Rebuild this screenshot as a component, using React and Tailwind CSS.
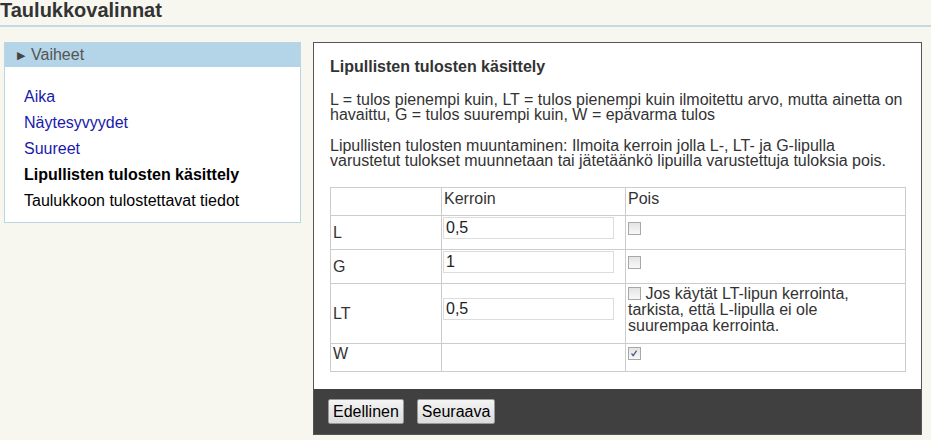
import React from "react";

function Cb({ checked, block }) {
  return (
    <span
      className={
        (block ? "block" : "inline-block align-middle -mt-[2px]") +
        " w-[13px] h-[13px] border border-[#a8a8a8] bg-gradient-to-b from-[#e4e4e4] to-[#f8f8f8] relative"
      }
    >
      {checked && (
        <svg viewBox="0 0 13 13" className="absolute left-0 top-0 w-[11px] h-[11px]">
          <path d="M3 6.5 L5 9 L9 3" stroke="#4a5a8a" strokeWidth="1.5" fill="none" />
        </svg>
      )}
    </span>
  );
}

function Field({ value }) {
  return (
    <div className="w-[171px] h-[22px] border border-[#dcdcdc] px-[2px] flex items-center text-[16px] text-[#222]">
      {value}
    </div>
  );
}

export default function App() {
  return (
    <div
      className="w-[931px] h-[440px] bg-[#f7f7ef] overflow-hidden text-[#333]"
      style={{ fontFamily: '"Liberation Sans", Arial, sans-serif' }}
    >
      <div className="h-[27px] border-b-2 border-[#c3d9e6] flex items-start">
        <h1 className="text-[20px] font-bold leading-[22px] text-[#333] -mt-[1px]">Taulukkovalinnat</h1>
      </div>
      <div className="flex items-start pt-[15px]">
        <div className="ml-[4px] w-[297px] border border-[#bcd5e3] bg-white">
          <div className="h-[24px] bg-[#b4d4e8] flex items-center pl-[12px] text-[16px] text-[#555]">
            <span className="text-[11px] mr-[6px] text-[#444]">▶</span>Vaiheet
          </div>
          <div className="pt-[17px] pb-[8px] pl-[19px] text-[16px] leading-[26px]">
            <div className="text-[#1a1aaa]">Aika</div>
            <div className="text-[#1a1aaa]">Näytesyvyydet</div>
            <div className="text-[#1a1aaa]">Suureet</div>
            <div className="font-bold text-black">Lipullisten tulosten käsittely</div>
            <div className="text-black">Taulukkoon tulostettavat tiedot</div>
          </div>
        </div>
        <div className="ml-[12px] w-[609px] h-[393px] border border-[#555] bg-white flex flex-col">
          <div className="flex-1 pl-[16px] pr-[14px] pt-[15px] text-[16px] leading-[15px]">
            <div className="font-bold leading-[18px]">Lipullisten tulosten käsittely</div>
            <p className="mt-[16px]">
              L = tulos pienempi kuin, LT = tulos pienempi kuin ilmoitettu arvo, mutta ainetta on havaittu, G = tulos suurempi kuin, W = epävarma tulos
            </p>
            <p className="mt-[16px]">
              Lipullisten tulosten muuntaminen: Ilmoita kerroin jolla L-, LT- ja G-lipulla varustetut tulokset muunnetaan tai jätetäänkö lipuilla varustettuja tuloksia pois.
            </p>
            <table className="mt-[19px] w-[576px] border-collapse text-[16px] leading-[16px]">
              <tbody>
                <tr className="h-[28px]">
                  <td className="border border-[#ccc] w-[111px]"></td>
                  <td className="border border-[#ccc] w-[184px] px-[2px] align-top pt-[3px]">Kerroin</td>
                  <td className="border border-[#ccc] px-[2px] align-top pt-[3px]">Pois</td>
                </tr>
                <tr className="h-[34px]">
                  <td className="border border-[#ccc] px-[2px]">L</td>
                  <td className="border border-[#ccc] px-[1px] align-top pt-[1px]">
                    <Field value="0,5" />
                  </td>
                  <td className="border border-[#ccc] px-[2px] align-top pt-[6px]"><Cb block /></td>
                </tr>
                <tr className="h-[34px]">
                  <td className="border border-[#ccc] px-[2px]">G</td>
                  <td className="border border-[#ccc] px-[1px] align-top pt-[1px]">
                    <Field value="1" />
                  </td>
                  <td className="border border-[#ccc] px-[2px] align-top pt-[6px]"><Cb block /></td>
                </tr>
                <tr className="h-[60px]">
                  <td className="border border-[#ccc] px-[2px]">LT</td>
                  <td className="border border-[#ccc] px-[1px] align-top pt-[14px]">
                    <Field value="0,5" />
                  </td>
                  <td className="border border-[#ccc] px-[2px] align-top pt-[2px] pb-[2px]">
                    <Cb /> Jos käytät LT-lipun kerrointa,<br />tarkista, että L-lipulla ei ole<br />suurempaa kerrointa.
                  </td>
                </tr>
                <tr className="h-[28px]">
                  <td className="border border-[#ccc] px-[2px] align-top pt-[2px]">W</td>
                  <td className="border border-[#ccc]"></td>
                  <td className="border border-[#ccc] px-[2px] align-top pt-[3px]"><Cb block checked /></td>
                </tr>
              </tbody>
            </table>
          </div>
          <div className="h-[45px] bg-[#404040] flex items-center gap-[13px] pl-[14px] pb-[1px]">
            <button className="h-[25px] px-[4px] border border-[#999] rounded-[2px] bg-gradient-to-b from-[#f4f4f4] to-[#dcdcdc] text-[16px] text-black">
              Edellinen
            </button>
            <button className="h-[25px] px-[4px] border border-[#999] rounded-[2px] bg-gradient-to-b from-[#f4f4f4] to-[#dcdcdc] text-[16px] text-black">
              Seuraava
            </button>
          </div>
        </div>
      </div>
    </div>
  );
}
